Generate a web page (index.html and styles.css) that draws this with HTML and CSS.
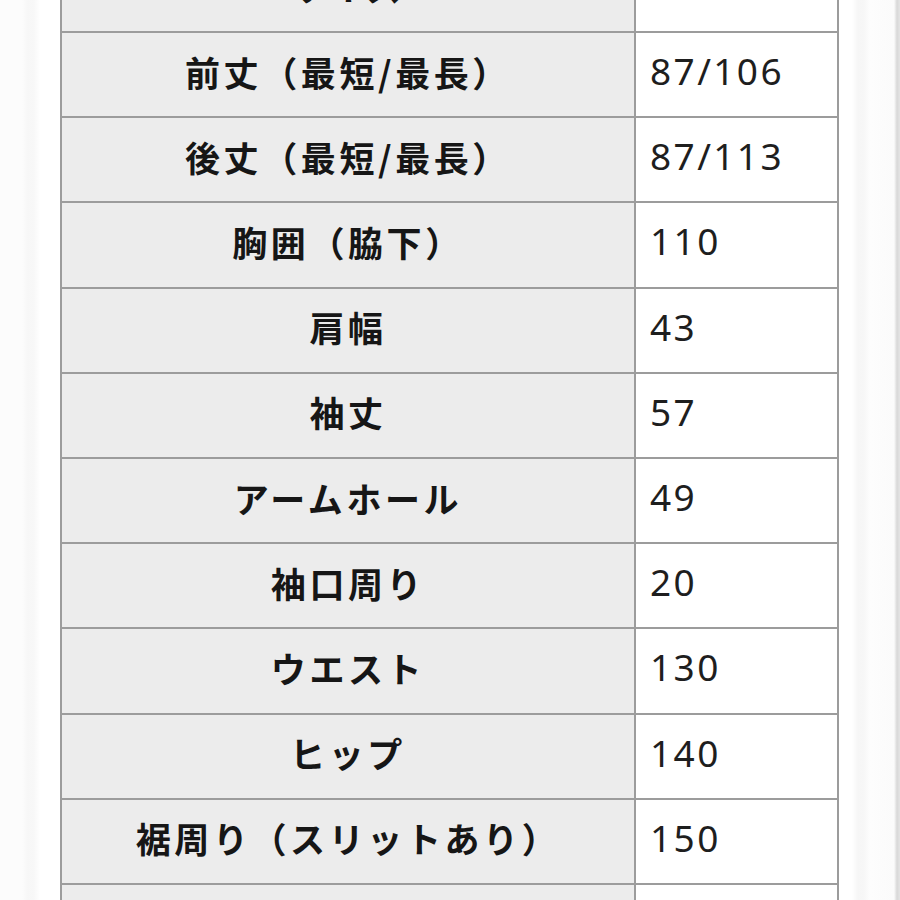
FILE: index.html
```html
<!DOCTYPE html>
<html lang="ja">
<head>
<meta charset="utf-8">
<title>サイズ表</title>
<link rel="stylesheet" href="styles.css">
</head>
<body>
<div class="page">
  <div class="sheet">
    <div class="grid">
      <div class="label">サイズ</div><div class="value"></div>
      <div class="label">前丈（最短/最長）</div><div class="value">87/106</div>
      <div class="label">後丈（最短/最長）</div><div class="value">87/113</div>
      <div class="label">胸囲（脇下）</div><div class="value">110</div>
      <div class="label">肩幅</div><div class="value">43</div>
      <div class="label">袖丈</div><div class="value">57</div>
      <div class="label">アームホール</div><div class="value">49</div>
      <div class="label">袖口周り</div><div class="value">20</div>
      <div class="label">ウエスト</div><div class="value">130</div>
      <div class="label">ヒップ</div><div class="value">140</div>
      <div class="label">裾周り（スリットあり）</div><div class="value">150</div>
      <div class="label"></div><div class="value"></div>
    </div>
  </div>
</div>
</body>
</html>
```
FILE: styles.css
```css
html, body {
  margin: 0;
  padding: 0;
  height: 100%;
  overflow: hidden;
}
body {
  background: linear-gradient(to right,
    #fcfcfc 0px, #fcfcfc 22px, #f7f7f7 28px, #f8f8f8 34px, #ffffff 40px,
    #ffffff 852px, #f6f6f6 858px, #f7f7f7 864px, #fdfdfd 870px,
    #fbfbfb 894px, #d8d8d8 897px, #e4e4e4 900px);
}
.page {
  padding-left: 60px;
}
.sheet {
  width: 779px;
  margin-top: -54.2px;
}
.grid {
  display: grid;
  grid-template-columns: 572px 201px;
  grid-auto-rows: 83.2px;
  gap: 2px;
  padding: 2px;
  background: #9c9c9c;
}
.label {
  background: #ececec;
  display: flex;
  align-items: center;
  justify-content: center;
  padding-bottom: 7px;
  box-sizing: border-box;
  font-family: "Noto Sans CJK JP", "Noto Sans", sans-serif;
  font-weight: 700;
  font-size: 35px;
  letter-spacing: 3.6px;
  color: #161616;
}
.value {
  background: #ffffff;
  display: flex;
  align-items: center;
  padding-left: 14px;
  padding-bottom: 8px;
  box-sizing: border-box;
  font-family: "Noto Sans", "Open Sans", sans-serif;
  font-size: 37px;
  letter-spacing: 2.4px;
  color: #1e1e1e;
}
```
